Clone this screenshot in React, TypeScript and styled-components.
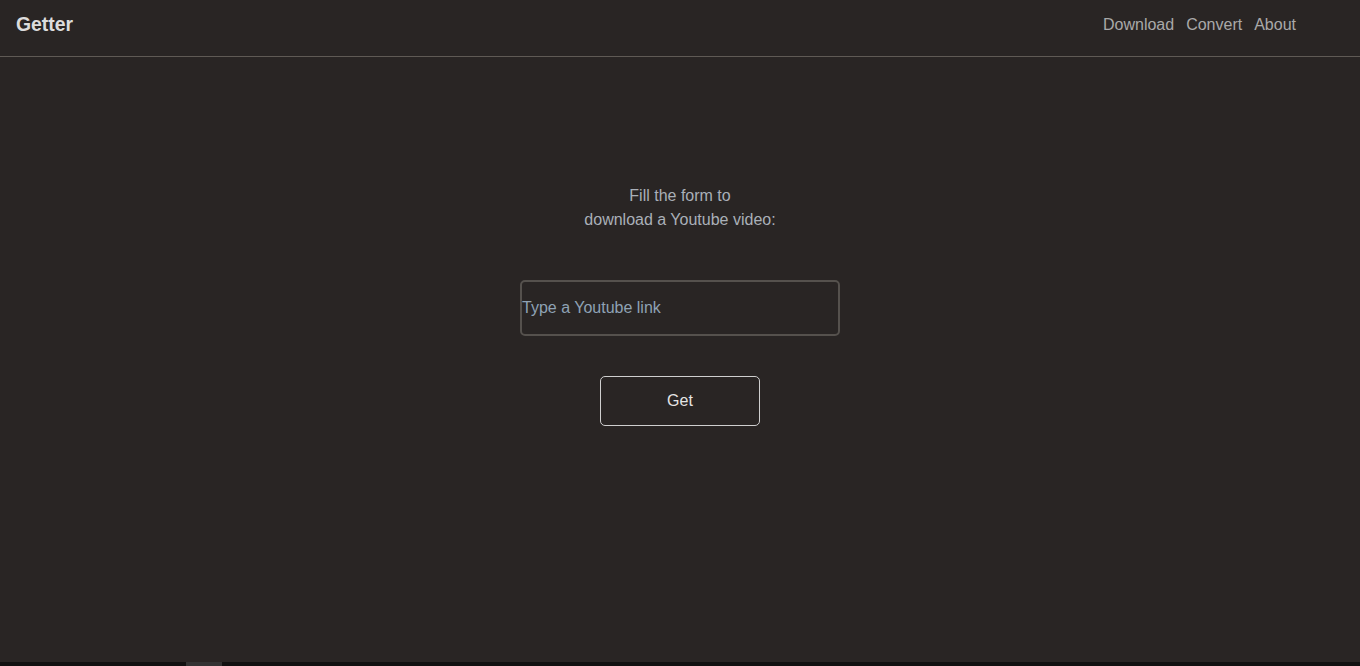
import React from 'react';
import styled, { createGlobalStyle } from 'styled-components';

const GlobalStyle = createGlobalStyle`
    html, body {
        margin: 0;
        padding: 0;
        background: #292524;
        font-family: 'Liberation Sans', Arial, sans-serif;
    }
`;

const Page = styled.div`
    min-height: 100vh;
    display: flex;
    flex-direction: column;
    background: #292524;
`;

const Header = styled.header`
    height: 56px;
    display: flex;
    align-items: center;
    justify-content: space-between;
    padding: 0 64px 0 16px;
    border-bottom: 1px solid #5f5a55;
    box-sizing: content-box;
`;

const Brand = styled.a`
    color: #dcdcdc;
    font-size: 19.4px;
    font-weight: bold;
    text-decoration: none;
    margin-top: -8px;
`;

const Nav = styled.nav`
    display: flex;
    gap: 12px;
    margin-top: -7px;
`;

const NavLink = styled.a`
    color: #a9a9a9;
    font-size: 16px;
    text-decoration: none;
`;

const Main = styled.main`
    flex: 1;
    display: flex;
    flex-direction: column;
    align-items: center;
    padding-top: 127px;
`;

const Intro = styled.p`
    margin: 0;
    color: #aab0b8;
    font-size: 16px;
    line-height: 24px;
    text-align: center;
`;

const Form = styled.form`
    display: flex;
    flex-direction: column;
    align-items: center;
    margin-top: 48px;
    gap: 40px;
`;

const LinkInput = styled.input`
    width: 320px;
    height: 56px;
    box-sizing: border-box;
    padding: 0;
    background: transparent;
    border: 2px solid #55514d;
    border-radius: 5px;
    color: #dcdcdc;
    font-family: inherit;
    font-size: 16px;
    outline: none;

    &::placeholder {
        color: #8fa2b4;
    }
`;

const Button = styled.button`
    width: 160px;
    height: 50px;
    background: transparent;
    border: 1px solid #cfcfcf;
    border-radius: 5px;
    color: #e4e4e4;
    font-family: inherit;
    font-size: 16px;
    cursor: pointer;
`;

const ScrollTrack = styled.div`
    height: 4px;
    background: #111111;
    padding-left: 186px;
`;

const ScrollThumb = styled.div`
    width: 36px;
    height: 4px;
    background: #333333;
`;

export default function App() {
    return (
        <>
            <GlobalStyle />
            <Page>
                <Header>
                    <Brand href="#">Getter</Brand>
                    <Nav>
                        <NavLink href="#">Download</NavLink>
                        <NavLink href="#">Convert</NavLink>
                        <NavLink href="#">About</NavLink>
                    </Nav>
                </Header>
                <Main>
                    <Intro>
                        Fill the form to
                        <br />
                        download a Youtube video:
                    </Intro>
                    <Form onSubmit={(e) => e.preventDefault()}>
                        <LinkInput type="text" placeholder="Type a Youtube link" />
                        <Button type="submit">Get</Button>
                    </Form>
                </Main>
                <ScrollTrack>
                    <ScrollThumb />
                </ScrollTrack>
            </Page>
        </>
    );
}
